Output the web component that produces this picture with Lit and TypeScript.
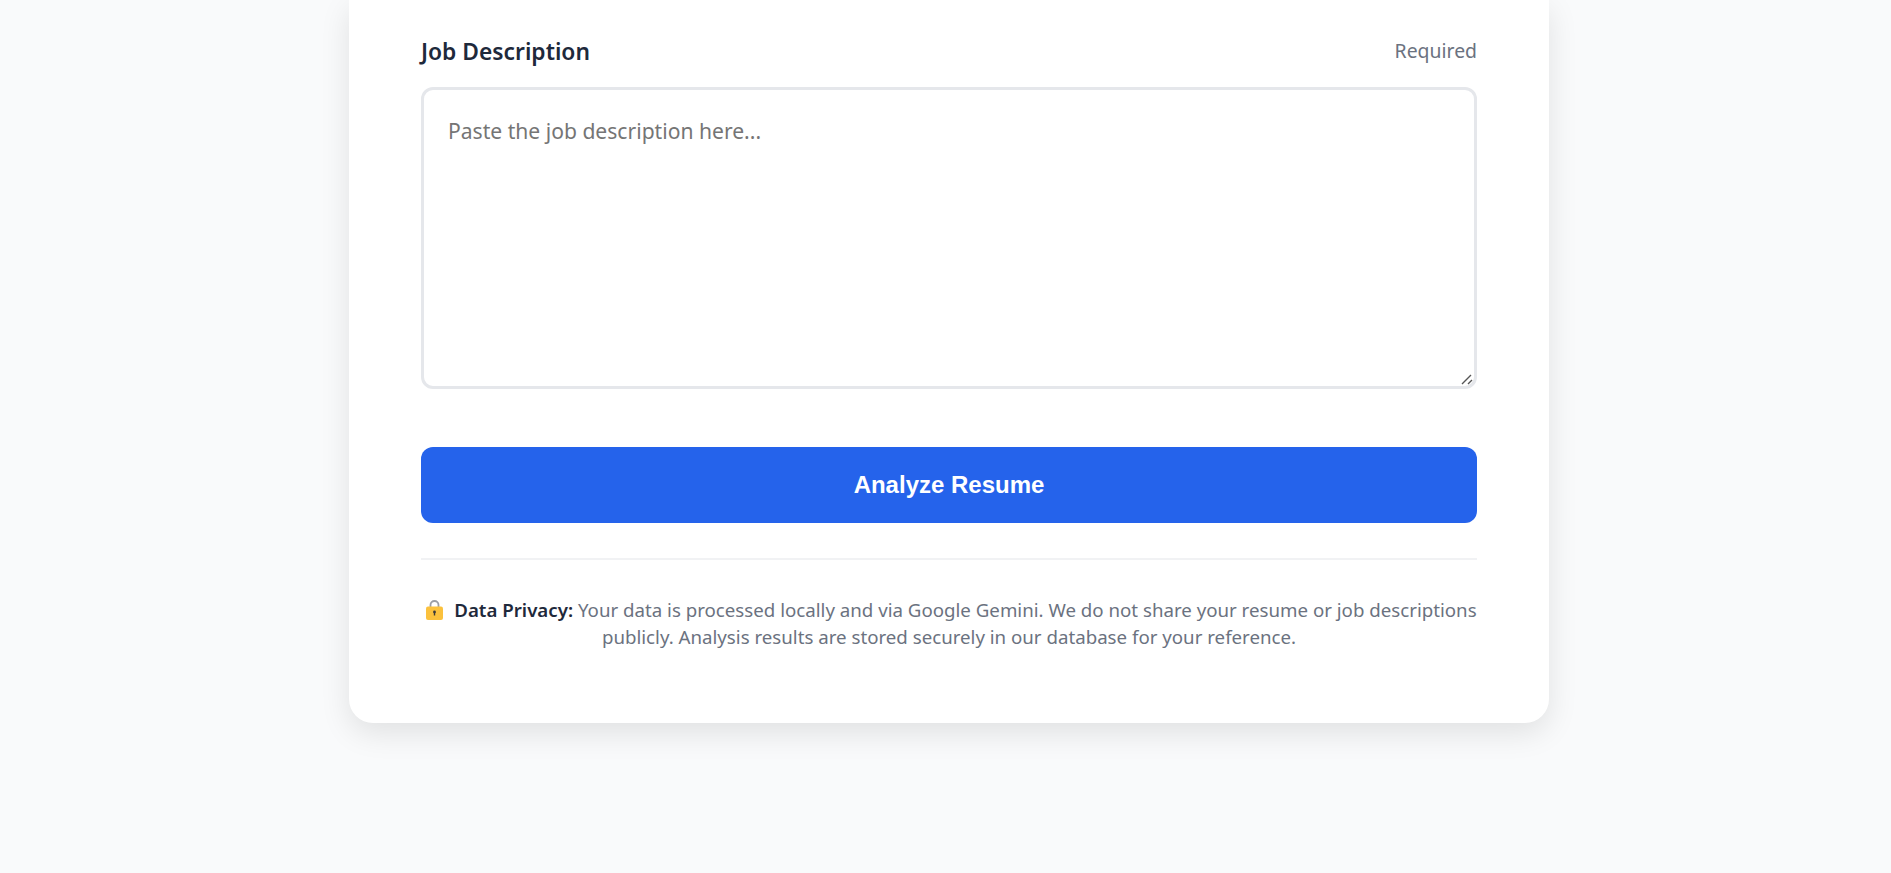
import { LitElement, html, css } from 'lit';
import { customElement } from 'lit/decorators.js';

@customElement('app-root')
export class AppRoot extends LitElement {
  static styles = css`
    :host {
      display: block;
      box-sizing: border-box;
      min-height: 873px;
      padding-left: 7px;
      background: #f9fafb;
      font-family: 'Noto Sans', 'Open Sans', sans-serif;
      color: #1f2937;
      overflow: hidden;
    }

    .card {
      box-sizing: border-box;
      width: 1200px;
      height: 723px;
      margin: 0 auto;
      padding: 35px 72px 0;
      background: #fff;
      border-radius: 0 0 24px 24px;
      box-shadow: 0 10px 30px rgba(0, 0, 0, 0.1);
    }

    .label-row {
      display: flex;
      justify-content: space-between;
      align-items: center;
      height: 32px;
      margin-bottom: 20px;
    }

    .label {
      font-size: 22.8px;
      font-weight: 600;
      color: #1e293b;
    }

    .required {
      position: relative;
      top: -1px;
      font-size: 19.4px;
      color: #6b7280;
    }

    textarea {
      display: block;
      box-sizing: border-box;
      width: 100%;
      height: 302px;
      padding: 26px 24px 24px;
      border: 3px solid #e5e7eb;
      border-radius: 12px;
      outline: none;
      font: inherit;
      font-size: 21.1px;
    }

    textarea::-webkit-resizer {
      background: url("data:image/svg+xml,%3Csvg xmlns='http://www.w3.org/2000/svg' width='15' height='15'%3E%3Cpath d='M3 13 12 4M9 13l4-4' stroke='%23555' stroke-width='1.4' fill='none'/%3E%3C/svg%3E");
    }

    .analyze {
      display: block;
      width: 100%;
      height: 76px;
      margin-top: 58px;
      border: none;
      border-radius: 12px;
      background: #2563eb;
      color: #fff;
      font-family: 'Liberation Sans', Arial, sans-serif;
      font-size: 24px;
      font-weight: 700;
    }

    .divider {
      height: 2px;
      margin-top: 35px;
      background: #f1f2f4;
    }

    .privacy {
      margin: 36px 0 0;
      font-size: 18.7px;
      line-height: 27px;
      text-align: center;
      color: #6b7280;
    }

    .privacy strong {
      font-weight: 600;
      color: #1e293b;
    }

    .lock {
      display: inline-block;
      width: 17px;
      height: 20px;
      margin: 0 6px 0 5px;
      vertical-align: -3px;
    }
  `;

  render() {
    return html`
      <div class="card">
        <div class="label-row">
          <span class="label">Job Description</span>
          <span class="required">Required</span>
        </div>
        <textarea placeholder="Paste the job description here..."></textarea>
        <button class="analyze">Analyze Resume</button>
        <div class="divider"></div>
        <p class="privacy">
          <svg class="lock" viewBox="0 0 17 20">
            <path d="M4.500 8V5a4 4 0 0 1 8 0V8" fill="none" stroke="#9b9ea6" stroke-width="1.800" />
            <rect x="0" y="6.500" width="17" height="13.500" rx="2" fill="#fbc13d" />
            <circle cx="8.500" cy="12" r="1.400" fill="#3b3a3a" />
            <rect x="7.800" y="12" width="1.400" height="3.500" fill="#3b3a3a" />
          </svg>
          <strong>Data Privacy:</strong> Your data is processed locally and via Google Gemini. We do not share your resume or job descriptions publicly. Analysis results are stored securely in our database for your reference.
        </p>
      </div>
    `;
  }
}
